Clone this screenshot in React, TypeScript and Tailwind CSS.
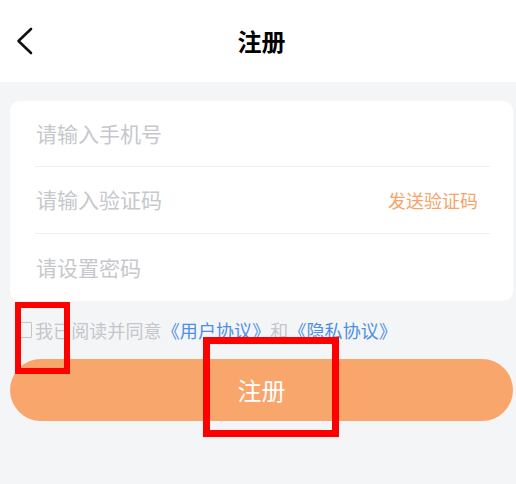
import React from "react";

export default function App() {
  const font = { fontFamily: '"Noto Sans CJK SC", "Noto Sans", sans-serif' };
  return (
    <div
      className="relative w-[516px] h-[484px] bg-[#f4f5f7] overflow-hidden"
      style={font}
    >
      {/* Header */}
      <div className="h-[82px] bg-white grid grid-cols-[60px_1fr_60px] items-center">
        <div className="pl-[15px] flex items-center">
          <svg width="20" height="28" viewBox="0 0 20 28" fill="none">
            <path
              d="M16 2 L3.5 14 L16 26"
              stroke="#111"
              strokeWidth="2.6"
              strokeLinecap="round"
              strokeLinejoin="round"
            />
          </svg>
        </div>
        <div className="text-center text-[24px] font-semibold text-black pl-[7px] leading-none">
          注册
        </div>
        <div />
      </div>

      {/* Form card */}
      <div className="ml-[10px] mr-[3px] mt-[19px] h-[200px] bg-white rounded-[10px] pl-[25px] pr-[23px] flex flex-col">
        <div className="h-[66px] flex items-center border-b border-[#eeeff1] pl-[1px]">
          <span className="text-[21px] text-[#c6c8cc]">请输入手机号</span>
        </div>
        <div className="h-[67px] flex items-center justify-between border-b border-[#eeeff1] pl-[1px] pr-[12px]">
          <span className="text-[21px] text-[#c6c8cc]">请输入验证码</span>
          <span className="text-[18px] text-[#f5a56a]">发送验证码</span>
        </div>
        <div className="h-[67px] flex items-center pl-[1px]">
          <span className="text-[21px] text-[#c6c8cc]">请设置密码</span>
        </div>
      </div>

      {/* Agreement */}
      <div className="h-[58px] flex items-center pl-[16px]">
        <div className="w-[16px] h-[16px] border-[1.5px] border-[#c3c5c9] rounded-[1px] mr-[3px]" />
        <span className="text-[18px] text-[#c4c6ca] tracking-[0.1px]">
          我已阅读并同意
          <span className="text-[#4d8fe6]">《用户协议》</span>
          和
          <span className="text-[#4d8fe6]">《隐私协议》</span>
        </span>
      </div>

      {/* Submit button */}
      <div className="ml-[10px] mr-[3px] h-[62px] rounded-full bg-[#f9a66c] flex items-center justify-center">
        <span className="text-[24px] text-white">注册</span>
      </div>

      {/* Red annotation boxes */}
      <div className="absolute left-[15px] top-[302px] w-[55px] h-[72px] border-[6px] border-[#ff0000]" />
      <div className="absolute left-[203px] top-[337px] w-[136px] h-[100px] border-[7px] border-[#ff0000]" />
    </div>
  );
}
